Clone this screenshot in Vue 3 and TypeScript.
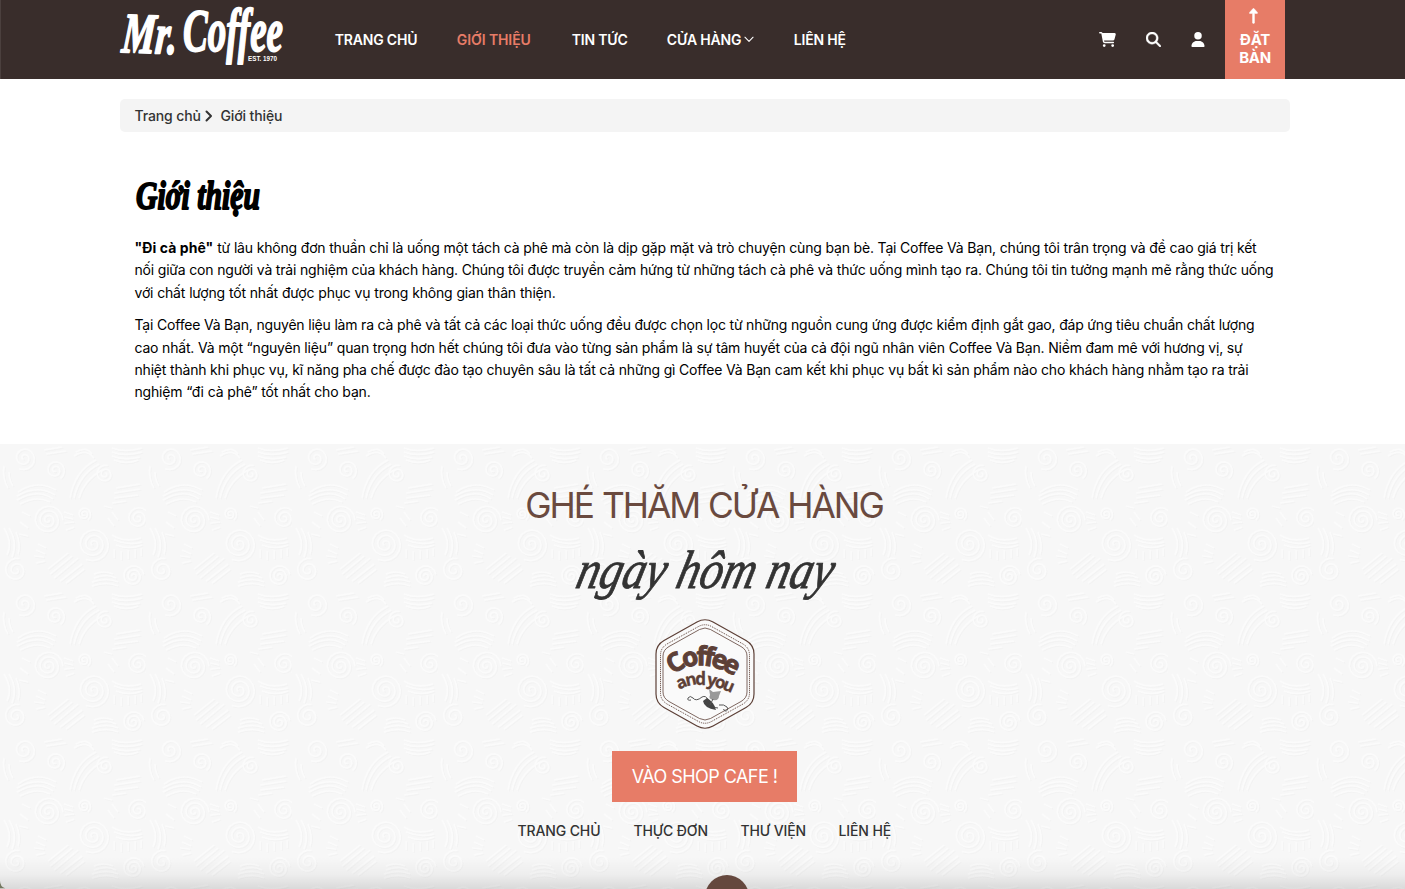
<script setup lang="ts">
interface NavItem { label: string; width: number; active?: boolean; caret?: boolean }
interface Line { text: string; width: number; lead?: string }

const nav: NavItem[] = [
  { label: 'TRANG CHỦ', width: 82 },
  { label: 'GIỚI THIỆU', width: 75, active: true },
  { label: 'TIN TỨC', width: 55 },
  { label: 'CỬA HÀNG', width: 87, caret: true },
  { label: 'LIÊN HỆ', width: 53 },
]

const paragraphs: Line[][] = [
  [
    { lead: '"Đi cà phê"', text: ' từ lâu không đơn thuần chỉ là uống một tách cà phê mà còn là dịp gặp mặt và trò chuyện cùng bạn bè. Tại Coffee Và Bạn, chúng tôi trân trọng và đề cao giá trị kết', width: 1122 },
    { text: 'nối giữa con người và trải nghiệm của khách hàng. Chúng tôi được truyền cảm hứng từ những tách cà phê và thức uống mình tạo ra. Chúng tôi tin tưởng mạnh mẽ rằng thức uống', width: 1139 },
    { text: 'với chất lượng tốt nhất được phục vụ trong không gian thân thiện.', width: 421 },
  ],
  [
    { text: 'Tại Coffee Và Bạn, nguyên liệu làm ra cà phê và tất cả các loại thức uống đều được chọn lọc từ những nguồn cung ứng được kiểm định gắt gao, đáp ứng tiêu chuẩn chất lượng', width: 1120 },
    { text: 'cao nhất. Và một “nguyên liệu” quan trọng hơn hết chúng tôi đưa vào từng sản phẩm là sự tâm huyết của cả đội ngũ nhân viên Coffee Và Bạn. Niềm đam mê với hương vị, sự', width: 1108 },
    { text: 'nhiệt thành khi phục vụ, kĩ năng pha chế được đào tạo chuyên sâu là tất cả những gì Coffee Và Bạn cam kết khi phục vụ bất kì sản phẩm nào cho khách hàng nhằm tạo ra trải', width: 1114 },
    { text: 'nghiệm “đi cà phê” tốt nhất cho bạn.', width: 236 },
  ],
]

const footerLinks: NavItem[] = [
  { label: 'TRANG CHỦ', width: 83 },
  { label: 'THỰC ĐƠN', width: 74 },
  { label: 'THƯ VIỆN', width: 65 },
  { label: 'LIÊN HỆ', width: 53 },
]

function spiral(cx: number, cy: number, r: number, turns: number, start: number): string {
  const pts: string[] = []
  const n = Math.round(turns * 16)
  for (let i = 0; i <= n; i++) {
    const a = start + (i / 16) * Math.PI * 2
    const q = 1 + (r - 1) * (i / n)
    pts.push(`${(cx + q * Math.cos(a)).toFixed(1)} ${(cy + q * Math.sin(a)).toFixed(1)}`)
  }
  return 'M' + pts.join('L')
}

const swirls: string[] = [
  spiral(48, 76, 15, 3, 0), spiral(93, 100, 17, 3, 2), spiral(138, 74, 12, 2.5, 4),
  spiral(55, 26, 10, 2, 1), spiral(133, 132, 11, 2.5, 3), spiral(105, 30, 9, 2, 5),
  spiral(24, 14, 12, 2, 2), spiral(16, 126, 12, 2, 5), spiral(84, 70, 7, 2, 1),
  'M18 48q18-13 38-2M17 52q20-12 38-1M17 56q20-12 36-1M20 60q16-9 30-2',
  'M70 54q5-28 26-38M74 54q5-24 25-34M79 54q5-18 23-28',
  'M50 130l22-18M54 134l24-20M60 137l22-17M66 139l18-14M48 125l20-16',
  'M112 4q12 5 30 0M112 8q12 5 30 0M112 12q12 5 28 1M114 16q12 5 24 0',
  'M112 91q12 8 29 3M114 96q14 6 28 2M116 101q13 5 26 0',
  'M114 114v-9M121 116v-9M128 115v-9M135 114v-9M141 112v-8',
  'M4 84q9 14 3 27M9 84q9 14 3 29M16 88q5 12 2 22M4 22q-2 12 4 22M9 28q0 8 4 14',
  'M92 138q14-5 26 0M92 142q14-5 26 0M94 134q12-5 22 0M94 130q9-4 19 0',
  'M64 68l9 3M64 73l9 2M64 79l10-1M66 86l8-3M36 106l9 4M34 112l10 1M36 119l9-2M38 100l8 4',
  'M116 44l24-4M114 49l26-4M114 54l24-3M112 59l14-2M76 8q10-6 16 2M74 12q12-8 20 2M44 6l18-3M46 10l20-3',
  'M28 84l-8-6M28 92l-9-2M30 72l-8-4M112 68l6 8M108 74l6 8M104 62l8 2',
]
</script>

<template>
  <div class="page">
    <header class="header">
      <div class="bar">
        <svg class="brand" width="172" height="79" viewBox="0 0 172 79">
          <g fill="#fff" stroke="#fff" stroke-linejoin="round" font-family="'Liberation Serif', serif" font-style="italic" font-weight="700">
            <text x="0" y="0" font-size="57" textLength="55" lengthAdjust="spacingAndGlyphs" stroke-width="1.800" transform="translate(2 52) rotate(2) skewX(-3)">Mr.</text>
            <text x="0" y="0" font-size="62" textLength="100" lengthAdjust="spacingAndGlyphs" stroke-width="1.800" transform="translate(64 51)">Coffee</text>
          </g>
          <text x="129" y="61" fill="#fff" font-size="8" font-family="'Liberation Sans', sans-serif" font-weight="700" textLength="29" lengthAdjust="spacingAndGlyphs">EST. 1970</text>
        </svg>
        <nav class="nav">
          <a v-for="n in nav" :key="n.label" class="nav-link" :class="{ active: n.active }" :style="{ width: n.width + 'px' }">
            <span>{{ n.label }}</span>
            <svg v-if="n.caret" class="caret" width="10" height="7" viewBox="0 0 11 7"><path d="M1 1l4.500 4.500L10 1" fill="none" stroke="#fff" stroke-width="1.200" stroke-linecap="round" stroke-linejoin="round" /></svg>
          </a>
        </nav>
        <div class="tools">
          <svg width="17" height="15" viewBox="0 0 576 512"><path fill="#fff" d="M0 24C0 10.700 10.700 0 24 0h45.500c22 0 41.500 12.800 50.600 32h411c26.300 0 45.500 25 38.600 50.400l-41 152.300c-8.500 31.400-37 53.300-69.500 53.300H170.700l5.400 28.500c2.200 11.300 12.100 19.500 23.600 19.500H488c13.300 0 24 10.700 24 24s-10.700 24-24 24H199.700c-34.600 0-64.300-24.600-70.700-58.500L77.400 54.500c-.7-3.800-4-6.500-7.900-6.500H24C10.700 48 0 37.300 0 24zm128 440a48 48 0 1 1 96 0 48 48 0 1 1-96 0zm336-48a48 48 0 1 1 0 96 48 48 0 1 1 0-96zM122 42h406l-46 226H165z" /></svg>
          <svg width="15" height="15" viewBox="0 0 512 512"><path fill="#fff" stroke="#fff" stroke-width="14" d="M416 208c0 45.900-14.900 88.300-40 122.700L502.600 457.400c12.500 12.500 12.500 32.800 0 45.300s-32.800 12.500-45.300 0L330.700 376c-34.400 25.200-76.800 40-122.700 40C93.100 416 0 322.900 0 208S93.100 0 208 0s208 93.100 208 208zM208 352a144 144 0 1 0 0-288 144 144 0 1 0 0 288z" /></svg>
          <svg width="14" height="15" viewBox="0 0 448 512"><path fill="#fff" d="M224 256a128 128 0 1 0 0-256 128 128 0 1 0 0 256zm-45.700 48C79.800 304 0 383.800 0 482.300 0 498.700 13.300 512 29.700 512h388.600c16.400 0 29.700-13.300 29.700-29.700C448 383.800 368.200 304 269.700 304h-91.400z" /></svg>
        </div>
        <a class="book">
          <svg width="9" height="16" viewBox="0 0 9 16"><path d="M3.500 15V5.500H.6Q0 5 .5 4.400L4 .5q.5-.5 1 0l3.500 3.900q.5.600-.2 1.100H5.500V15q-1 1-2 0z" fill="#fff" stroke="#fff" stroke-width=".4" /></svg>
          <span>ĐẶT</span><span>BÀN</span>
        </a>
      </div>
    </header>

    <div class="crumbs">
      <span class="crumb-home">Trang chủ</span>
      <svg width="8" height="12" viewBox="0 0 8 12"><path d="M1.500 1.500L6 6l-4.500 4.500" fill="none" stroke="#333" stroke-width="2" stroke-linecap="round" stroke-linejoin="round" /></svg>
      <span class="crumb-here">Giới thiệu</span>
    </div>

    <main class="about">
      <svg class="title" width="136" height="50" viewBox="0 0 136 50" role="heading">
        <text x="1" y="35" font-size="39" textLength="124" lengthAdjust="spacingAndGlyphs" font-family="'Liberation Serif', serif" font-style="italic" font-weight="700" stroke="#000" stroke-width="1.900" stroke-linejoin="round">Giới thiệu</text>
      </svg>
      <p v-for="(p, i) in paragraphs" :key="i">
        <span v-for="l in p" :key="l.text" class="line" :style="{ width: l.width + 'px' }"><b v-if="l.lead">{{ l.lead }}</b>{{ l.text }}</span>
      </p>
    </main>

    <section class="visit">
      <svg class="texture" width="100%" height="445">
        <defs>
          <pattern id="swirl" width="146" height="146" patternUnits="userSpaceOnUse">
            <g fill="none" stroke="#f3f3f3" stroke-width="1.200" transform="translate(1.300 1.300)"><path v-for="(d, i) in swirls" :key="i" :d="d" /></g>
            <g fill="none" stroke="#fbfbfb" stroke-width="1.600"><path v-for="(d, i) in swirls" :key="i" :d="d" /></g>
          </pattern>
        </defs>
        <rect width="100%" height="445" fill="url(#swirl)" />
      </svg>
      <h2>GHÉ THĂM CỬA HÀNG</h2>
      <svg class="today" width="290" height="76" viewBox="0 0 290 76">
        <text x="0" y="0" font-size="54" textLength="256" lengthAdjust="spacingAndGlyphs" font-family="'Liberation Serif', serif" font-style="italic" fill="#333" stroke="#333" stroke-width=".8" transform="translate(16 47) skewX(-14)">ngày hôm nay</text>
      </svg>
      <svg class="badge" width="100" height="110" viewBox="0 0 100 110">
        <g fill="none" stroke="#5d4037">
          <path d="M42 3Q50-1.500 58 3L91 21.500Q99 26 99 35V75Q99 84 91 88.500L58 107Q50 111.500 42 107L9 88.500Q1 84 1 75V35Q1 26 9 21.500Z" fill="#fafafa" stroke-width="1.200" />
          <path d="M43.500 7.500Q50 4 56.500 7.500L88 25Q94.500 29 94.500 36V74Q94.500 81 88 85L56.500 102.500Q50 106 43.500 102.500L12 85Q5.500 81 5.500 74V36Q5.500 29 12 25Z" stroke-width="1" stroke-dasharray="1 1" />
          <path d="M44.500 10.500Q50 7.500 55.500 10.500L86 27.500Q92 31 92 37V73Q92 79 86 82.500L55.500 99.500Q50 102.500 44.500 99.500L14 82.500Q8 79 8 73V37Q8 31 14 27.500Z" stroke-width=".8" />
        </g>
        <defs>
          <path id="arc-top" d="M18 56Q46 33 90 64" />
          <path id="arc-low" d="M24 71Q46 58 80 76" />
        </defs>
        <g fill="#5d4037" stroke="#5d4037" font-family="'Open Sans', sans-serif" font-weight="700">
          <text font-size="26" letter-spacing="-3.400" stroke-width="1"><textPath href="#arc-top">Coffee</textPath></text>
          <text font-size="17" letter-spacing="-2.100" stroke-width=".3"><textPath href="#arc-low">and you</textPath></text>
        </g>
        <g fill="none" stroke="#555" stroke-width="1"><path d="M36 81q-4 1-3-2 2-3 5 0 3 4 9-1 4-2 6 3 4 8 10 8M64 86q5-1 8 2 2 4-2 4-2-1-1-2" /><path d="M48 82q1 7 13 9-2-8-9-12z" fill="#444" stroke="none" /><path d="M54 70l4 3 8-1-2 5q0 5-6 4-5-1-3-5z" fill="#999" stroke="none" /><path d="M58 80l-3 6" /></g>
      </svg>
      <a class="shop">VÀO SHOP CAFE !</a>
      <nav class="links">
        <a v-for="f in footerLinks" :key="f.label" :style="{ width: f.width + 'px' }">{{ f.label }}</a>
      </nav>
      <div class="fade"></div>
      <div class="top-button"></div>
      <svg class="corner" width="6" height="9" viewBox="0 0 8 10"><path d="M0 0Q0 8 7 10H0z" fill="#73775f" /></svg>
    </section>
  </div>
</template>

<style>
html, body { margin: 0; overflow: hidden; background: #fff; }
</style>

<style scoped>
* { box-sizing: border-box; }
.page { width: 1405px; height: 889px; overflow: hidden; font-family: Inter, 'Noto Sans', sans-serif; font-size: 14px; color: #000; }
.header { height: 79px; background: #392d2b; border-left: 1px solid #4b403e; }
.bar { width: 1170px; height: 79px; margin-left: 119px; display: flex; align-items: center; }
.brand { align-self: flex-start; flex: none; margin-left: -1px; }
.nav { display: flex; gap: 40px; margin-left: 43.800px; }
.nav-link { display: flex; align-items: center; color: #fff; font-weight: 600; white-space: nowrap; letter-spacing: -0.2px; }
.nav-link.active { color: #e77c67; letter-spacing: -0.1px; }
.caret { margin-left: 3px; flex: none; }
.tools { margin-left: auto; display: flex; align-items: center; gap: 30px; margin-right: 20px; }
.book { width: 60px; height: 79px; margin-right: 5px; padding-top: 8px; background: #e77c67; color: #fff; display: flex; flex-direction: column; align-items: center; font-weight: 700; font-size: 15px; line-height: 18px; letter-spacing: -0.3px; }
.book svg { margin: 0 4px 7px 0; flex: none; }
.crumbs { width: 1170px; height: 33px; margin: 20px 0 0 120px; padding: 0 15px 0 14.500px; background: #f4f4f4; border-radius: 5px; display: flex; align-items: center; color: #333; font-weight: 500; letter-spacing: -0.12px; }
.crumb-home { width: 70px; }
.crumb-here { margin-left: 8px; }
.about { height: 312px; margin-left: 134.500px; padding-top: 42px; }
.title { display: block; }
p { margin: 0 0 10px; }
.title + p { margin-top: 13px; }
.line { display: block; line-height: 22.4px; white-space: nowrap; letter-spacing: -0.19px; text-align: justify; text-align-last: justify; }
.line b { letter-spacing: 0.06px; }
.visit { position: relative; height: 445px; background: #f7f7f7; display: flex; flex-direction: column; align-items: center; }
.texture { position: absolute; left: 0; top: 0; }
h2, .today, .badge, .shop, .links { position: relative; flex: none; }
h2 { margin: 37px 0 0 3px; font-size: 35.300px; line-height: 50px; font-weight: 400; color: #6a4a3f; white-space: nowrap; letter-spacing: -2px; word-spacing: 1px; }
.today { margin-top: 10px; }
.badge { margin-top: 2px; margin-left: 4px; }
.shop { width: 185px; height: 51px; margin: 22px 0 0 4px; background: #e77c67; color: #fff; font-size: 18px; line-height: 51px; text-align: center; white-space: nowrap; letter-spacing: -0.55px; }
.links { display: flex; gap: 33px; margin-top: 19px; margin-left: 4px; color: #333; font-weight: 500; line-height: 20px; white-space: nowrap; letter-spacing: -0.12px; }
.fade { position: absolute; left: 0; right: 0; bottom: 0; height: 32px; background: linear-gradient(rgba(0,0,0,0), rgba(0,0,0,.04) 55%, rgba(0,0,0,.12)); }
.top-button { position: absolute; left: 705px; top: 431px; width: 44px; height: 44px; border-radius: 50%; background: #65483e; clip-path: inset(0 0 30px 0); }
.corner { position: absolute; left: 0; bottom: 0; }
</style>
